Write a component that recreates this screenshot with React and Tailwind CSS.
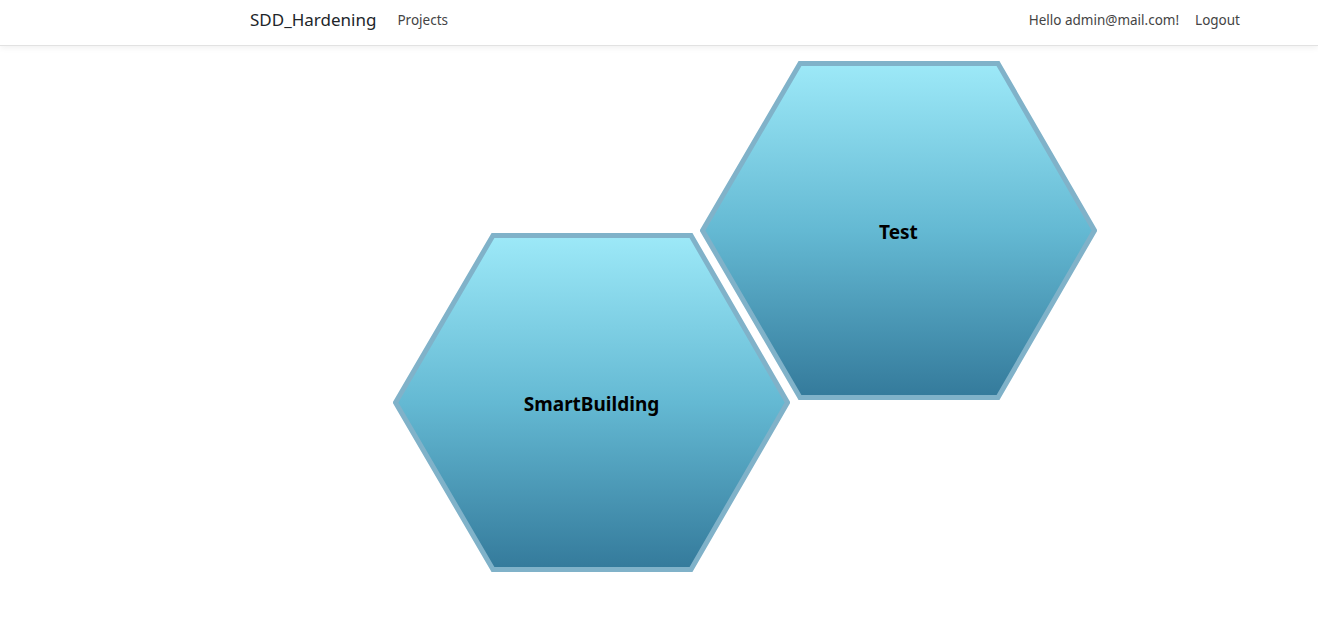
import React from "react";

function Hex({ label, id }) {
  return (
    <div className="relative w-[397px] h-[339px] flex items-center justify-center shrink-0">
      <svg className="absolute inset-0" width="397" height="339" viewBox="0 0 397 339">
        <defs>
          <linearGradient id={id} x1="0" y1="0" x2="0" y2="1">
            <stop offset="0" stopColor="#9de9f8" />
            <stop offset="0.5" stopColor="#64b9d3" />
            <stop offset="1" stopColor="#347a9b" />
          </linearGradient>
        </defs>
        <polygon
          points="2.5,169.5 100,2.5 298,2.5 394.5,169.5 298,336.5 100,336.5"
          fill={`url(#${id})`}
          stroke="#80b2c9"
          strokeWidth="5"
          strokeLinejoin="miter"
        />
      </svg>
      <span className="relative pt-[3px] font-['Noto_Sans','Open_Sans',sans-serif] font-bold text-[19px] text-black">
        {label}
      </span>
    </div>
  );
}

export default function App() {
  return (
    <div className="min-h-[627px] bg-white font-['Noto_Sans','Open_Sans',sans-serif]">
      <nav className="h-[46px] pb-[5px] border-b border-[#e2e2e2] shadow-[0_2px_6px_rgba(0,0,0,0.06)] flex items-center pl-[250px] pr-[78px]">
        <span className="text-[17px] text-[#212529]">SDD_Hardening</span>
        <span className="ml-[21px] text-[13.5px] text-[#444]">Projects</span>
        <div className="ml-auto flex items-center">
          <span className="text-[13.5px] text-[#444]">Hello admin@mail.com!</span>
          <span className="ml-[16px] text-[13.5px] text-[#444]">Logout</span>
        </div>
      </nav>
      <div className="flex items-start pl-[393px] pt-[15px]">
        <div className="mt-[172px]">
          <Hex label="SmartBuilding" id="g1" />
        </div>
        <div className="-ml-[90px]">
          <Hex label="Test" id="g2" />
        </div>
      </div>
    </div>
  );
}
